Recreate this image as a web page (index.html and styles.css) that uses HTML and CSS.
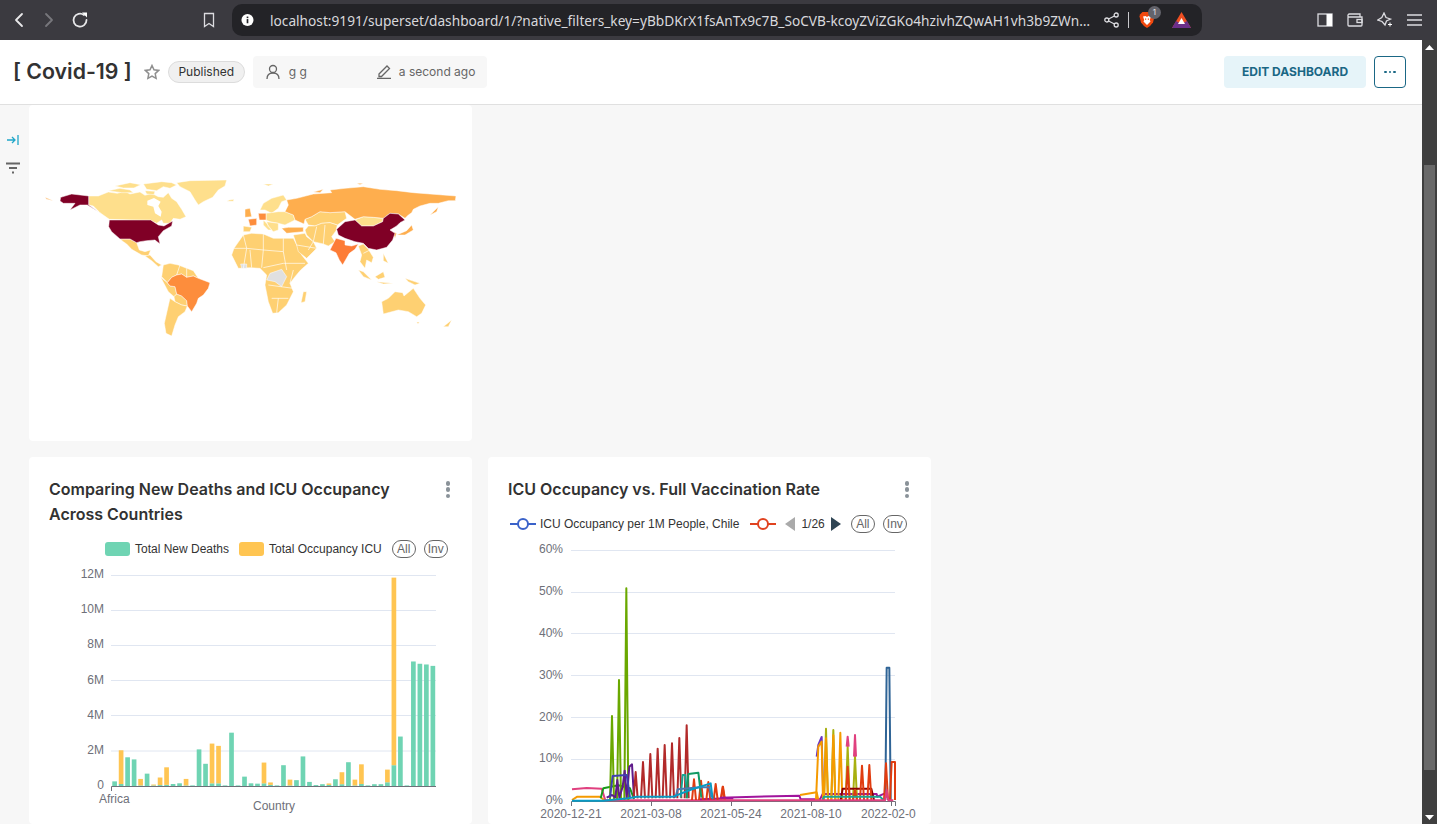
FILE: index.html
```html
<!DOCTYPE html>
<html lang="en">
<head>
<meta charset="utf-8">
<title>Covid-19</title>
<link rel="stylesheet" href="styles.css">
</head>
<body>
<div class="browser">
  <div class="nav">
    <svg class="ic" width="16" height="16" viewBox="0 0 16 16"><path class="st" d="M11 2 5 8l6 6"/></svg>
    <svg class="ic dim" width="16" height="16" viewBox="0 0 16 16"><path class="st" d="m5 2 6 6-6 6"/></svg>
    <svg class="ic" width="18" height="18" viewBox="0 0 18 18"><path class="st" d="M15.500 9A6.500 6.500 0 1 1 13 4"/><path class="fw" d="M11 1.500h5v5z"/></svg>
  </div>
  <svg class="bookmark" width="14" height="16" viewBox="0 0 14 16"><path class="st1" d="M2.500 1.500h9v13L7 11.500l-4.500 3z"/></svg>
  <div class="urlbar">
    <svg width="14" height="14" viewBox="0 0 14 14"><circle class="fw" cx="7" cy="7" r="6.500"/><rect class="dk" x="6.100" y="6" width="1.800" height="4.500"/><rect class="dk" x="6.100" y="3.300" width="1.800" height="1.700"/></svg>
    <span class="url">localhost:9191/superset/dashboard/1/?native_filters_key=yBbDKrX1fsAnTx9c7B_SoCVB-kcoyZViZGKo4hzivhZQwAH1vh3b9ZWn…</span>
    <svg class="share" width="15" height="16" viewBox="0 0 15 16"><circle class="st1" cx="2.800" cy="8" r="2"/><circle class="st1" cx="12.200" cy="3" r="2"/><circle class="st1" cx="12.200" cy="13" r="2"/><path class="st1" d="m4.600 7 5.800-3M4.600 9l5.800 3"/></svg>
    <span class="sep"></span>
    <div class="brave">
      <svg width="16" height="18" viewBox="0 0 16 18"><path class="brv" d="M3.500 1h9L15 3.500l.5 2-1.500 6-3 3.500L8 17l-3-2-3-3.500-1.500-6 .5-2z"/><path class="fw" d="M4 5.500 6.500 5 8 6l1.500-1L12 5.500 10.800 9l.7 1.500L8 14l-3.500-3.500.7-1.500z"/><path class="brv" d="M6 7.500h1.200v1.200H6zM8.800 7.500H10v1.200H8.800z"/></svg>
      <span class="badge">1</span>
    </div>
    <svg class="bat" width="19" height="17" viewBox="0 0 19 17"><path class="bat-o" d="M9.500 0 19 16H0z"/><path class="bat-p" d="M0 16l4-7 5.500 3 5.500-3 4 7z"/><path class="fw" d="M9.500 6 13 12H6z"/></svg>
  </div>
  <div class="tools">
    <svg width="16" height="14" viewBox="0 0 16 14"><rect class="st1" x="1" y="1" width="14" height="12"/><rect class="fw" x="9.500" y="1" width="5.500" height="12"/></svg>
    <svg width="16" height="14" viewBox="0 0 16 14"><path class="st1" d="M1 3.500V12a1 1 0 0 0 1 1h12a1 1 0 0 0 1-1V4H2.500A1.300 1.300 0 0 1 1 3a1.500 1.500 0 0 1 1.500-2H13v3"/><rect class="st1" x="10" y="6.500" width="5" height="3"/></svg>
    <svg width="16" height="16" viewBox="0 0 16 16"><path class="st1" d="M7 1 9 5.500 13.500 7 9.500 9 8 13 5 9.500 .8 8 4.800 5.500z"/><path class="fw" d="M12.500 10.500h1V12H15v1h-1.500v1.500h-1V13H11v-1h1.500z"/></svg>
    <svg width="15" height="12" viewBox="0 0 15 12"><path class="st1" d="M0 1h15M0 6h15M0 11h15"/></svg>
  </div>
</div>

<div class="window">
  <div class="page">
    <header class="dash-head">
      <h1 class="title">[ Covid-19 ]</h1>
      <svg class="star" width="16" height="16" viewBox="0 0 16 16"><path class="star-p" d="m8 1.500 2 4.300 4.700.6-3.500 3.200.9 4.700L8 12l-4.100 2.300.9-4.700L1.300 6.400 6 5.800z"/></svg>
      <span class="pill">Published</span>
      <div class="meta">
        <svg width="14" height="16" viewBox="0 0 14 16"><circle class="meta-s" cx="7" cy="5" r="3.500"/><path class="meta-s" d="M1 15c0-4 2.500-6 6-6s6 2 6 6"/></svg>
        <span class="owner">g g</span>
        <svg class="pen" width="16" height="15" viewBox="0 0 16 15"><path class="meta-s" d="M3 10 11 2l2.500 2.500-8 8H3zM1 14.500h14"/></svg>
        <span class="when">a second ago</span>
      </div>
      <span class="spacer"></span>
      <button class="edit">EDIT DASHBOARD</button>
      <button class="more"><i></i><i></i><i></i></button>
    </header>

    <div class="body">
      <aside class="rail">
        <svg width="14" height="12" viewBox="0 0 14 12"><path class="rail-a" d="M1 6h8M6 3l3 3-3 3M12 1v10"/></svg>
        <svg width="14" height="12" viewBox="0 0 14 12"><path class="rail-f" d="M0 1.500h14M3 6h8M6 10.500h2"/></svg>
      </aside>
      <main class="grid">
        <section class="card map-card">
          <svg class="map" width="443" height="336" viewBox="29 105 443 336">
            <g transform="translate(30 170) scale(.33333)">
              <g class="land c-l">
                <path d="M176 78 205 78 235 66 262 70 285 64 300 72 330 66 345 76 365 70 385 80 400 82 415 68 425 85 440 95 455 118 468 140 450 148 430 145 420 160 400 160 395 150 380 160 362 152 238 148 210 128 190 108 176 105Z"/>
                <path d="M340 42 395 35 425 38 440 45 420 55 400 50 380 62 350 58ZM235 62 270 55 300 60 310 68 275 68ZM255 48 300 38 332 44 312 54 280 54ZM345 62 375 64 372 74 350 72Z"/>
                <path d="M440 38 480 32 590 30 585 48 565 60 548 82 520 95 505 105 495 90 480 65 450 50Z"/>
                <path d="M598 90 612 88 610 94 590 94ZM700 42 730 42 715 48Z"/>
                <path d="M690 120 700 100 725 85 760 75 770 90 755 95 745 115 725 130 705 120Z"/>
                <path d="M708 130 745 125 765 125 790 135 795 150 765 165 745 160 720 155 708 150Z"/>
                <path d="M975 150 1000 140 1030 142 1060 145 1058 155 1030 168 995 168Z"/>
                <path d="M710 155 745 160 745 180 730 185 715 170ZM700 150 710 160 725 180 715 180 700 165Z"/>
              </g>
              <path class="hudson" d="M352 92 372 84 392 95 385 108 395 125 392 140 375 130 370 110 352 105Z"/>
              <g class="land c-m">
                <path d="M270 207 300 207 320 218 328 240 345 245 362 240 355 258 335 255 305 238 290 222 280 215Z"/>
                <path d="M345 258 360 255 378 275 395 285 385 290 365 272Z"/>
                <path d="M400 285 420 280 445 285 470 295 490 302 505 325 490 318 470 322 455 312 440 315 425 322 412 338 395 320Z"/>
                <path d="M392 322 412 338 420 348 435 350 440 372 432 380 415 365Z"/>
                <path d="M432 380 440 372 455 378 470 392 472 408 455 405 435 395Z"/>
                <path d="M420 385 435 395 455 405 472 408 465 425 445 440 435 465 425 498 408 490 403 460 412 420Z"/>
                <path d="M605 255 612 235 640 195 665 190 700 192 730 205 790 205 800 225 815 255 835 280 812 300 795 320 780 340 790 365 770 405 745 428 728 430 715 395 705 345 710 315 690 295 660 293 625 295Z"/>
                <path d="M820 365 830 365 825 395 813 398Z"/>
                <path d="M790 195 825 190 830 200 850 215 860 235 830 265 805 245 800 225Z"/>
                <path d="M640 168 665 172 660 185 640 185Z"/>
                <path d="M825 148 845 140 870 125 900 128 945 125 950 145 922 165 900 158 875 160 855 168 835 165Z"/>
                <path d="M835 168 855 168 875 160 900 158 922 165 918 182 905 200 915 215 895 228 880 222 850 215 830 195 825 180Z"/>
                <path d="M985 228 1000 222 1015 238 1030 262 1025 278 1010 270 1005 295 990 275 995 255Z"/>
                <path d="M985 300 1000 305 1025 330 1000 320ZM1035 320 1060 305 1065 322 1045 328ZM1040 335 1090 340 1060 342ZM1125 325 1170 340 1155 345 1135 335ZM1060 250 1075 280 1060 272Z"/>
                <path d="M1055 395 1075 385 1095 365 1118 368 1122 378 1150 355 1170 385 1187 405 1175 430 1160 440 1135 425 1105 420 1060 432Z"/>
                <path d="M1240 470 1265 450 1255 470ZM1160 456 1168 456 1164 462Z"/>
              </g>
              <g class="land c-r">
                <path d="M770 90 800 85 850 72 905 68 900 60 945 55 1000 50 1050 58 1100 62 1150 68 1200 72 1278 78 1276 92 1255 92 1225 100 1200 100 1170 108 1150 118 1145 128 1135 135 1125 145 1105 132 1080 130 1060 145 1030 142 1000 140 975 148 945 125 900 128 870 125 845 140 825 148 822 162 795 150 790 135 765 125 775 105Z"/>
                <path d="M755 175 775 172 820 172 820 185 770 190Z"/>
                <path d="M1200 135 1225 110 1220 125ZM1088 185 1100 190 1095 205ZM1100 195 1130 182 1145 165 1150 180 1125 195ZM45 82 70 92 50 88ZM645 118 660 115 665 140 645 142Z"/>
                <path d="M980 40 1000 40 990 44ZM850 66 880 58 870 68Z"/>
              </g>
              <g class="land c-b">
                <path d="M412 338 425 322 440 315 455 312 470 322 490 318 505 325 540 338 535 355 520 375 505 385 500 400 485 425 472 408 470 392 455 378 440 372 435 350 420 348Z"/>
                <path d="M655 148 680 145 680 165 660 168Z"/>
                <path d="M685 130 708 130 708 150 688 150Z"/>
              </g>
              <g class="land c-i"><path d="M905 230 918 205 945 212 945 225 965 228 985 222 975 238 958 250 938 285 928 270 918 248 900 240Z"/></g>
              <g class="land c-g"><path d="M720 310 755 298 770 320 755 350 735 335 710 330Z"/><path d="M632 282 650 282 650 295 635 295Z"/></g>
              <g class="land c-d">
                <path d="M92 82 125 72 176 78 176 105 205 125 172 105 150 105 120 120 135 100 100 100 90 93Z"/>
                <path d="M238 150 362 150 385 165 402 168 428 153 425 168 400 182 385 200 390 222 375 210 350 212 330 215 320 218 300 207 270 207 245 185 236 170Z"/>
                <path d="M920 178 945 155 975 150 995 168 1030 168 1058 155 1060 145 1080 130 1105 132 1125 150 1110 158 1100 168 1080 180 1095 190 1088 210 1070 232 1040 240 1015 235 1000 220 975 215 945 205 925 195Z"/>
              </g>
              <path class="borders" d="M640 195 650 235 612 235M650 235 700 240 700 192M700 240 695 293M700 240 760 245 760 205M760 245 770 300M640 295 650 235M700 293 760 280 825 280M715 345 790 355M725 385 775 385M745 385 740 428M790 300 780 340M660 240 665 293M860 235 800 225M850 215 835 240M450 285 440 315M470 295 470 322M885 165 880 222M860 170 850 215M1000 250 1020 240"/>
            </g>
          </svg>
        </section>
        <span></span>

        <section class="card chart-card">
          <div class="card-head">
            <h2>Comparing New Deaths and ICU Occupancy Across Countries</h2>
            <div class="kebab"><i></i><i></i><i></i></div>
          </div>
          <div class="legend legend-left">
            <span class="swatch sw-g"></span><span>Total New Deaths</span>
            <span class="swatch sw-y"></span><span>Total Occupancy ICU</span>
            <span class="lbtn lb-first">All</span><span class="lbtn">Inv</span>
          </div>
          <svg class="chart" width="443" height="272" viewBox="29 552 443 272">
            <path class="grid-l" d="M111 575.500H436M111 610.500H436M111 645.500H436M111 680.500H436M111 715.500H436M111 751H436"/>
            <g class="ax">
              <text x="104" y="578" text-anchor="end">12M</text><text x="104" y="613" text-anchor="end">10M</text><text x="104" y="648" text-anchor="end">8M</text><text x="104" y="684" text-anchor="end">6M</text><text x="104" y="719" text-anchor="end">4M</text><text x="104" y="754" text-anchor="end">2M</text><text x="104" y="789" text-anchor="end">0</text>
              <text x="99" y="803">Africa</text><text x="253" y="810">Country</text>
            </g>
            <g transform="translate(111.300 786.300) scale(6.495 -17.580)">
              <g class="bar-g">
                <rect x=".15" width=".72" height=".28"/><rect x="1.150" width=".72" height=".13"/><rect x="2.150" width=".72" height="1.650"/><rect x="3.150" width=".72" height="1.530"/><rect x="4.150" width=".72" height=".05"/><rect x="5.150" width=".72" height=".72"/><rect x="6.150" width=".72" height=".05"/><rect x="7.150" width=".72" height=".07"/><rect x="8.150" width=".72" height=".08"/><rect x="9.150" width=".72" height=".13"/>
                <rect x="10.150" width=".72" height=".17"/><rect x="11.150" width=".72" height=".05"/><rect x="12.150" width=".72" height=".05"/><rect x="13.150" width=".72" height="2.100"/><rect x="14.150" width=".72" height="1.280"/><rect x="15.150" width=".72" height=".17"/><rect x="16.150" width=".72" height=".17"/><rect x="17.150" width=".72" height=".05"/><rect x="18.150" width=".72" height="3.050"/><rect x="19.150" width=".72" height=".05"/>
                <rect x="20.150" width=".72" height=".55"/><rect x="21.150" width=".72" height=".17"/><rect x="22.150" width=".72" height=".15"/><rect x="23.150" width=".72" height=".17"/><rect x="24.150" width=".72" height=".08"/><rect x="25.150" width=".72" height=".05"/><rect x="26.150" width=".72" height="1.200"/><rect x="27.150" width=".72" height=".05"/><rect x="28.150" width=".72" height=".35"/><rect x="29.150" width=".72" height="1.700"/>
                <rect x="30.150" width=".72" height=".25"/><rect x="31.150" width=".72" height=".07"/><rect x="32.150" width=".72" height=".12"/><rect x="33.150" width=".72" height=".08"/><rect x="34.150" width=".72" height=".40"/><rect x="35.150" width=".72" height=".12"/><rect x="36.150" width=".72" height="1.370"/><rect x="37.150" width=".72" height=".05"/><rect x="38.150" width=".72" height=".13"/><rect x="39.150" width=".72" height=".05"/>
                <rect x="40.150" width=".72" height=".12"/><rect x="41.150" width=".72" height=".12"/><rect x="42.150" width=".72" height=".23"/><rect x="43.150" width=".72" height="1.200"/><rect x="44.150" width=".72" height="2.830"/><rect x="45.150" width=".72" height=".05"/><rect x="46.150" width=".72" height="7.100"/><rect x="47.150" width=".72" height="6.970"/><rect x="48.150" width=".72" height="6.930"/><rect x="49.150" width=".72" height="6.850"/>
              </g>
              <g class="bar-y">
                <rect x="1.150" y=".13" width=".72" height="1.920"/><rect x="4.150" y=".05" width=".72" height=".37"/><rect x="6.150" y=".05" width=".72" height=".05"/><rect x="7.150" y=".07" width=".72" height=".43"/><rect x="8.150" y=".08" width=".72" height="1"/><rect x="11.150" y=".05" width=".72" height=".37"/><rect x="15.150" y=".17" width=".72" height="2.260"/><rect x="16.150" y=".17" width=".72" height="2.130"/><rect x="23.150" y=".17" width=".72" height="1.180"/><rect x="24.150" y=".08" width=".72" height=".14"/><rect x="27.150" y=".05" width=".72" height=".33"/><rect x="33.150" y=".08" width=".72" height=".08"/><rect x="35.150" y=".12" width=".72" height=".68"/><rect x="37.150" y=".05" width=".72" height=".33"/><rect x="38.150" y=".13" width=".72" height="1.120"/><rect x="42.150" y=".23" width=".72" height=".72"/><rect x="43.150" y="1.200" width=".72" height="10.670"/>
              </g>
            </g>
            <path class="axis" d="M111.500 791V786.500H436"/>
          </svg>
        </section>

        <section class="card chart-card">
          <div class="card-head">
            <h2>ICU Occupancy vs. Full Vaccination Rate</h2>
            <div class="kebab"><i></i><i></i><i></i></div>
          </div>
          <div class="legend legend-right">
            <svg width="26" height="14" viewBox="0 0 26 14"><path class="lg-blue" d="M0 7h26"/><circle class="lg-blue lg-c" cx="13" cy="7" r="5"/></svg>
            <span class="lg-label">ICU Occupancy per 1M People, Chile</span>
            <svg class="lg-red-ic" width="26" height="14" viewBox="0 0 26 14"><path class="lg-red" d="M0 7h26"/><circle class="lg-red lg-c" cx="13" cy="7" r="5"/></svg>
            <svg class="pager-l" width="10" height="14" viewBox="0 0 10 14"><path class="pg-off" d="M10 0v14L0 7z"/></svg>
            <span class="pager-t">1/26</span>
            <svg class="pager-r" width="10" height="14" viewBox="0 0 10 14"><path class="pg-on" d="M0 0v14l10-7z"/></svg>
            <span class="lbtn lb1">All</span><span class="lbtn">Inv</span>
          </div>
          <svg class="chart line-chart" width="443" height="290" viewBox="488 534 443 290">
            <path class="grid-l" d="M571 550.500H895M571 592.500H895M571 633.500H895M571 675.500H895M571 717.500H895M571 759.500H895"/>
            <g class="ax">
              <text x="563" y="553" text-anchor="end">60%</text><text x="563" y="595" text-anchor="end">50%</text><text x="563" y="637" text-anchor="end">40%</text><text x="563" y="679" text-anchor="end">30%</text><text x="563" y="721" text-anchor="end">20%</text><text x="563" y="762" text-anchor="end">10%</text><text x="563" y="804" text-anchor="end">0%</text>
              <text x="571" y="818" text-anchor="middle">2020-12-21</text><text x="651" y="818" text-anchor="middle">2021-03-08</text><text x="731" y="818" text-anchor="middle">2021-05-24</text><text x="811" y="818" text-anchor="middle">2021-08-10</text><text x="861" y="818">2022-02-0</text>
            </g>
            <path class="axis" d="M571.500 806V801.500H895.500V806M651.500 802V806M731.500 802V806M811.500 802V806M891.500 802V806"/>
            <g transform="translate(500 500) scale(.33333)" class="lines">
              <path class="l-pink" d="M216 868 260 864 305 866 316 901H700"/>
              <path class="l-orange" d="M216 900 232 890H300L312 900"/>
              <path class="l-purple" d="M600 898 700 894"/>
              <path class="l-green" d="M302 895 310 865 355 856 390 865 402 897"/>
              <path class="l-lime" d="M330 900 336 648 342 900M351 900 357 540 363 900M373 900 379 265 385 900"/>
              <path class="l-dpurple" d="M320 893 336 885 346 892 352 840 358 893 368 860 374 812 380 893 388 800 396 793 402 893"/>
              <path class="l-indigo" d="M330 893 338 828 380 825 390 893"/>
              <path class="l-red" d="M401 895 407 816 413 895M423 895 429 786 435 895M445 895 451 762 457 895M467 895 473 746 479 895M488 895 494 735 500 895M510 895 516 730 522 895M532 895 538 714 544 895M554 895 560 676 566 895"/>
              <path class="l-flame" d="M576 900 582 838 588 900M597 900 603 842 609 900M619 900 625 846 631 900M641 900 647 852 653 900M663 900 669 860 675 900"/>
              <path class="l-teal" d="M542 893 548 825 556 825 562 893"/>
              <path class="l-emerald" d="M560 895 565 822 595 818 604 893"/>
              <path class="l-steel" d="M526 893 533 868 600 862 628 862 634 893"/>
              <path class="l-cyan" d="M216 902H310L385 895 410 890H520L570 870 632 850 638 897"/>
            </g>
            <g transform="translate(720 500) scale(.33333)" class="lines">
              <path class="l-flame" d="M2 900 8 860 14 900"/>
              <path class="l-magenta" d="M0 893 238 887 242 898H300L308 882H470L472 890 495 880 505 895"/>
              <path class="l-orange" d="M240 885 290 877 295 900"/>
              <path class="l-violet" d="M290 770 295 735 305 711 310 900"/>
              <path class="l-steelb" d="M496 900 500 503H508L512 900"/>
              <path class="l-olive" d="M312 900 318 686 324 900M334 900 340 690 346 900M377 900 383 740 389 900M399 900 405 770 411 900"/>
              <path class="l-orange" d="M288 900 295 740 305 725 309 900M312 900 318 715 324 900M334 900 340 706 346 900M355 900 361 698 367 900"/>
              <path class="l-hot" d="M380 740 383 710 386 740M402 770 405 705 408 770"/>
              <path class="l-dred" d="M362 900 368 866H454L462 900"/>
              <path class="l-flame" d="M377 900 383 800 389 900M399 900 405 870 411 900M420 900 426 797 432 900M442 900 448 795 454 900M492 900 498 790 504 900M510 900 515 786H525V900"/>
              <path class="l-teal" d="M308 900 312 890H480L490 900"/>
              <path class="l-pink" d="M0 901H495L500 870 505 901H520"/>
            </g>
          </svg>
        </section>
      </main>
    </div>
  </div>
  <div class="scroll">
    <svg width="11" height="6" viewBox="0 0 11 6"><path class="fw" d="M5.500 0 10 5H1z"/></svg>
    <div class="thumb"></div>
    <svg class="down" width="11" height="6" viewBox="0 0 11 6"><path class="fw" d="M5.500 5 1 0h9z"/></svg>
  </div>
</div>
</body>
</html>
```

FILE: styles.css
```css
* { box-sizing: border-box; }
html, body { margin: 0; height: 824px; overflow: hidden; }
body { font-family: Inter, "Liberation Sans", sans-serif; background: #f7f7f7; color: #323232; }

.fw { fill: #fff; }
.dk { fill: #232327; }
.st { fill: none; stroke: #e8e8ea; stroke-width: 1.800; stroke-linecap: round; stroke-linejoin: round; }
.st1 { fill: none; stroke: #dcdce0; stroke-width: 1.300; }

.browser { height: 40px; background: #3b3a40; display: flex; align-items: center; padding: 0 15px 0 11px; }
.nav { display: flex; align-items: center; gap: 14px; width: 221px; }
.ic.dim .st { stroke: #77777c; }
.bookmark { margin-right: 16px; margin-left: -30px; }
.urlbar { width: 970px; height: 32px; background: #232327; border-radius: 10px; display: flex; align-items: center; padding: 0 11px 0 9px; }
.url { margin-left: 16px; font: 13.700px "Noto Sans", sans-serif; color: #d8d8dc; white-space: nowrap; width: 823px; overflow: hidden; flex: none; }
.share { margin-left: 11px; flex: none; }
.sep { width: 1px; height: 16px; background: #c8c8cc; margin: 0 10px 0 9px; flex: none; }
.brave { position: relative; width: 16px; height: 18px; margin-right: 17px; flex: none; }
.brave svg { display: block; }
.brv { fill: #f1490f; }
.badge { position: absolute; left: 9px; top: -5px; width: 13px; height: 13px; border-radius: 50%; background: #63636b; color: #e8e8e8; font-size: 8px; line-height: 13px; text-align: center; }
.bat { flex: none; }
.bat-o { fill: #ef4f22; }
.bat-p { fill: #6b2f8a; }
.tools { margin-left: auto; display: flex; align-items: center; gap: 14px; }

.window { display: flex; height: 784px; }
.page { flex: 1; min-width: 0; display: flex; flex-direction: column; }
.scroll { width: 15px; background: #3f3f3f; padding: 5px 2px 3px; display: flex; flex-direction: column; align-items: center; }
.thumb { width: 11px; height: 605px; background: #696969; margin-top: 114px; }
.down { margin-top: auto; }

.dash-head { height: 65px; background: #fff; border-bottom: 1px solid #e0e0e0; display: flex; align-items: center; padding: 0 16px 0 13px; flex: none; }
.title { margin: -2px 0 0; font-size: 21.300px; font-weight: 600; color: #323232; white-space: nowrap; }
.star { margin-left: 12px; }
.star-p { fill: none; stroke: #8f8f8f; stroke-width: 1.500; }
.pill { margin-left: 8px; height: 22px; width: 77px; flex: none; border: 1px solid #dcdcdc; border-radius: 11px; background: #f0f0f0; font-size: 12px; line-height: 20px; text-align: center; color: #323232; }
.meta { margin-left: 8px; width: 234px; height: 32px; flex: none; background: #f7f7f7; border-radius: 4px; display: flex; align-items: center; padding: 0 0 1px 13px; font-size: 12px; color: #666; }
.meta-s { fill: none; stroke: #666; stroke-width: 1.300; }
.owner { margin-left: 9px; width: 87px; flex: none; }
.pen { margin-right: 7px; flex: none; }
.when { white-space: nowrap; }
.spacer { flex: 1; }
.edit { width: 142px; height: 32px; border: 0; border-radius: 4px; background: #e6f4f9; color: #1a6785; font: 700 12px Inter, sans-serif; padding: 0 0 1px; }
.more { margin-left: 8px; width: 32px; height: 32px; border: 1px solid #1a6785; border-radius: 4px; background: #fff; display: flex; align-items: center; justify-content: center; gap: 2px; padding: 0; }
.more i { width: 2.500px; height: 2.500px; background: #1a6785; border-radius: 50%; }

.body { flex: 1; display: flex; min-height: 0; overflow: hidden; }
.rail { width: 29px; flex: none; display: flex; flex-direction: column; align-items: center; padding: 29px 3px 0 0; gap: 16px; }
.rail-a { fill: none; stroke: #20a7c9; stroke-width: 1.300; }
.rail-f { fill: none; stroke: #666; stroke-width: 1.800; }

.grid { flex: 1; display: grid; grid-template-columns: 443px 443px; grid-template-rows: 336px 1fr; gap: 16px; align-content: start; }
.card { background: #fff; border-radius: 4px; }
.map-card { height: 336px; overflow: hidden; }
.map { display: block; }
.land path { stroke: #fff; stroke-width: 1.500; stroke-linejoin: round; }
.hudson { fill: #fff; }
.c-l { fill: #fedf8c; }
.c-m { fill: #fed072; }
.c-r { fill: #feae4e; }
.c-b { fill: #fd8d3c; }
.c-i { fill: #fd7c36; }
.c-g { fill: #e0e0e0; }
.c-d { fill: #800026; }
.borders { fill: none; stroke: #fff; stroke-width: 2; }

.chart-card { height: 367px; position: relative; overflow: hidden; }
.card-head { display: flex; justify-content: space-between; padding: 20px 21px 0 20px; height: 79px; }
.card-head h2 { margin: 0; font-size: 16px; font-weight: 600; line-height: 25px; color: #323232; width: 370px; }
.kebab { display: flex; flex-direction: column; gap: 1.800px; padding: 4px 1px; }
.kebab i { width: 4.500px; height: 4.500px; background: #8a9299; border-radius: 50%; }
.legend { display: flex; align-items: center; font: 12px "Liberation Sans", sans-serif; color: #333; white-space: nowrap; }
.legend-left { height: 15px; padding-left: 76px; margin-top: 5px; }
.swatch { width: 25px; height: 14px; border-radius: 3px; margin-right: 5px; }
.swatch + span + .swatch { margin-left: 10px; }
.sw-g { background: #6fd4b3; }
.sw-y { background: #ffc552; }
.lbtn { height: 18px; min-width: 24px; padding: 0 3px; border: 1px solid #666; border-radius: 9px; line-height: 16px; text-align: center; color: #666; font-size: 12px; margin-left: 8px; }
.lb-first { margin-left: 10px; }
.legend-right { position: absolute; top: 58px; left: 22px; height: 18px; }
.lg-label { margin-left: 4px; }
.lg-red-ic { margin-left: 11px; }
.lg-blue { fill: none; stroke: #3a62c9; stroke-width: 2; }
.lg-red { fill: none; stroke: #e0421f; stroke-width: 2; }
.lg-c { fill: #fff; }
.pager-l { margin-left: 9px; }
.pager-t { margin-left: 6px; color: #333; }
.pager-r { margin-left: 6px; }
.pg-off { fill: #aaa; }
.pg-on { fill: #2f4554; }
.lb1 { margin-left: 10px; }

.chart { display: block; position: absolute; left: 0; bottom: 0; }
.grid-l { fill: none; stroke: #e0e6f1; stroke-width: 1; }
.ax text { font: 12px "Liberation Sans", sans-serif; fill: #6e7079; }
.axis { fill: none; stroke: #6e7079; stroke-width: 1; }
.bar-g { fill: #6fd4b3; }
.bar-y { fill: #ffc552; }

.lines path { fill: none; stroke-width: 6; stroke-linejoin: round; }
.l-pink { stroke: #e0407f; }
.l-orange { stroke: #f59a00; }
.l-purple, .l-magenta { stroke: #a0149c; }
.l-green { stroke: #179a1a; }
.l-lime { stroke: #6aa800; }
.l-dpurple { stroke: #5f1a8a; }
.l-indigo { stroke: #3f3fb0; }
.l-red { stroke: #b22a2a; }
.l-flame { stroke: #e03c10; }
.l-teal { stroke: #1aa592; }
.l-emerald { stroke: #159a65; }
.l-steel { stroke: #4a7ab0; }
.l-cyan { stroke: #0a9ac4; }
.l-violet { stroke: #6a35c0; }
.l-steelb { stroke: #2f6496; }
.l-olive { stroke: #a8b010; }
.l-hot { stroke: #e0407f; }
.l-dred { stroke: #8b0000; }
```
